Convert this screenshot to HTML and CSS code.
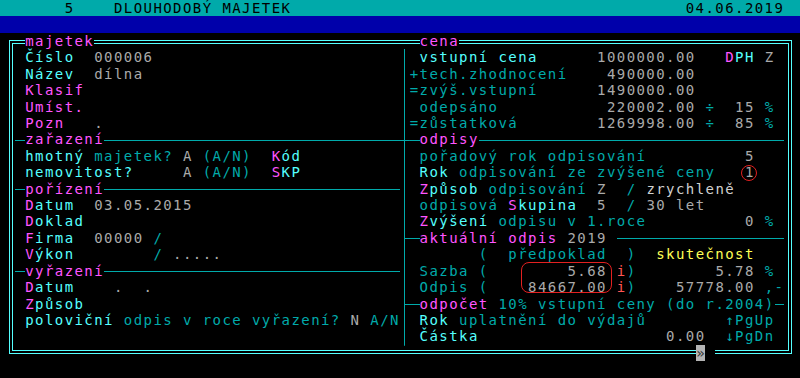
FILE: index.html
```html
<!DOCTYPE html>
<html lang="cs">
<head>
    <meta charset="UTF-8">
    <title>Dlouhodobý majetek</title>
    <link rel="stylesheet" href="styles.css">
</head>
<body>
<div class="screen">
    <div class="title">      5    DLOUHODOBÝ MAJETEK                                        04.06.2019</div>
    <div class="menu"></div>

    <div class="frame">
        <div class="row head"><div class="l"> <span class="sec">majetek</span></div><div></div><div class="r"> <span class="sec">cena</span></div></div>

        <div class="row"><div class="l"> <span class="c">Číslo</span>  <span class="g">000006</span></div><div class="sep"></div><div class="r"> <span class="c">vstupní cena</span>      <span class="g">1000000.00</span>   <span class="m">D</span><span class="c">PH</span> <span class="g">Z</span></div></div>
        <div class="row"><div class="l"> <span class="c">Název</span>  <span class="g">dílna</span></div><div class="sep"></div><div class="r">+tech.zhodnocení    <span class="g">490000.00</span></div></div>
        <div class="row"><div class="l"> <span class="m">Klasif</span></div><div class="sep"></div><div class="r">=zvýš.vstupní      <span class="g">1490000.00</span></div></div>
        <div class="row"><div class="l"> <span class="m">Umíst.</span></div><div class="sep"></div><div class="r"> odepsáno           <span class="g">220002.00</span> ÷  <span class="g">15</span> %</div></div>
        <div class="row"><div class="l"> <span class="m">Pozn</span>   <span class="g">.</span></div><div class="sep"></div><div class="r">=zůstatková        <span class="g">1269998.00</span> ÷  <span class="g">85</span> %</div></div>

        <div class="row"><div class="l rule"> <span class="sec">zařazení</span></div><div class="sep cross"></div><div class="r rule"> <span class="sec">odpisy</span></div></div>
        <div class="row"><div class="l"> <span class="c">hmotný</span> majetek? <span class="g">A</span> (A/N)  <span class="m">K</span><span class="c">ód</span></div><div class="sep"></div><div class="r"> pořadový rok odpisování          <span class="g">5</span></div></div>
        <div class="row"><div class="l"> <span class="c">nemovitost?</span>     <span class="g">A</span> (A/N)  <span class="m">S</span><span class="c">KP</span></div><div class="sep"></div><div class="r"> <span class="c">Rok</span> odpisování ze zvýšené ceny   <span class="g mark">1</span></div></div>

        <div class="row"><div class="l rule"> <span class="sec">pořízení</span></div><div class="sep"></div><div class="r"> <span class="m">Z</span><span class="c">působ</span> odpisování <span class="g">Z</span>  / <span class="w">zrychleně</span></div></div>
        <div class="row"><div class="l"> <span class="m">D</span><span class="c">atum</span>  <span class="g">03.05.2015</span></div><div class="sep"></div><div class="r"> odpisová <span class="m">S</span><span class="c">kupina</span>  <span class="g">5</span>  / <span class="g">30 let</span></div></div>
        <div class="row"><div class="l"> <span class="m">D</span><span class="c">oklad</span></div><div class="sep"></div><div class="r"> <span class="m">Z</span><span class="c">výšení</span> odpisu v 1.roce          <span class="g">0</span> %</div></div>
        <div class="row"><div class="l"> <span class="m">F</span><span class="c">irma</span>  <span class="g">00000</span> /</div><div class="sep tee"></div><div class="r rule"> <span class="sec">aktuální odpis <span class="g">2019</span> </span></div></div>
        <div class="row"><div class="l"> <span class="m">V</span><span class="c">ýkon</span>        / <span class="g">.....</span></div><div class="sep"></div><div class="r">       (  předpoklad  )  <span class="y">skutečnost</span></div></div>

        <div class="row"><div class="l rule"> <span class="sec">vyřazení</span></div><div class="sep"></div><div class="r"> Sazba (        <span class="g">5.68</span> <span class="red">i</span>)        <span class="g">5.78</span> %</div></div>
        <div class="row"><div class="l"> <span class="m">D</span><span class="c">atum</span>    <span class="g">.</span>  <span class="g">.</span></div><div class="sep"></div><div class="r"> Odpis (    <span class="g">84667.00</span> <span class="red">i</span>)    <span class="g">57778.00</span> ,-</div></div>
        <div class="row"><div class="l"> <span class="m">Z</span><span class="c">působ</span></div><div class="sep tee"></div><div class="r rule"> <span class="sec">odpočet <span class="d">10% vstupní ceny (do r.2004)</span></span></div></div>
        <div class="row"><div class="l"> <span class="c">poloviční</span> odpis v roce vyřazení? <span class="g">N</span> A/N</div><div class="sep"></div><div class="r"> <span class="c">Rok</span> uplatnění do výdajů        ↑PgUp</div></div>
        <div class="row"><div class="l"></div><div class="sep"></div><div class="r"> <span class="c">Částka</span>                   <span class="g">0.00</span>  ↓PgDn</div></div>

        <div class="foot">                                                                     <span class="btn">»</span><span class="gap"> </span></div>
    </div>

    <div class="note"></div>
</div>
</body>
</html>
```

FILE: styles.css
```css
body {
    margin: 0;
    background: #000;
}
.screen {
    position: relative;
    width: 800px;
    height: 378px;
    overflow: hidden;
    background: #000;
    color: #00aaaa;
    font-family: "DejaVu Sans Mono", monospace;
    font-size: 14px;
    line-height: 17.5px;
    letter-spacing: 1.43px;
}
.title, .l, .r, .foot {
    white-space: pre;
}
.title {
    height: 16.43px;
    padding-left: 5.5px;
    background: #00aaaa;
    color: #000;
}
.menu {
    height: 16.43px;
    background: #0000aa;
}

/* double frame round the form */
.frame {
    width: 783px;
    box-sizing: border-box;
    margin: 7.14px 0 0 9px;
    padding: 8.3px 6.56px 8.6px 5.36px;
    border: 1px solid #55ffff;
    box-shadow: inset 0 0 0 2px #000, inset 0 0 0 3px #55ffff;
}
.row {
    display: grid;
    grid-template-columns: 384.54px 9.86px 374.68px;
    height: 16.43px;
}
.head {
    margin-top: -16.43px;
}
.sep {
    background: linear-gradient(#00aaaa, #00aaaa) no-repeat center / 1px 100%;
}
.sep.cross {
    background:
        linear-gradient(#00aaaa, #00aaaa) no-repeat center / 1px 100%,
        linear-gradient(#00aaaa, #00aaaa) no-repeat center / 100% 1px;
}
.sep.tee {
    background:
        linear-gradient(#00aaaa, #00aaaa) no-repeat center / 1px 100%,
        linear-gradient(#00aaaa, #00aaaa) no-repeat right center / 50% 1px;
}
.rule {
    background: linear-gradient(#00aaaa, #00aaaa) no-repeat 0 50% / 100% 1px;
}
.sec {
    background: #000;
    color: #ff55ff;
}
.foot {
    height: 16.43px;
    margin-bottom: -16.43px;
}
.btn, .gap {
    display: inline-block;
    width: 9.86px;
    height: 16.43px;
    vertical-align: top;
    line-height: 16.43px;
    letter-spacing: 0;
    text-align: center;
    background: #000;
}
.btn {
    background: #b4b4b4;
    color: #333;
}

/* colours of the text-mode palette */
.c { color: #55ffff; }
.d { color: #00aaaa; }
.m { color: #ff55ff; }
.g { color: #aaaaaa; }
.w { color: #d0d0d0; }
.y { color: #ffff55; }
.red { color: #ff5555; }

/* red marks drawn over the screen */
.mark {
    position: relative;
}
.mark::after {
    content: "";
    position: absolute;
    left: -4px;
    top: 1px;
    width: 14px;
    height: 14px;
    border: 1.5px solid #e32020;
    border-radius: 50%;
}
.note {
    position: absolute;
    left: 521px;
    top: 262px;
    width: 89px;
    height: 29px;
    border: 1.5px solid #e32020;
    border-radius: 8px;
}
```
